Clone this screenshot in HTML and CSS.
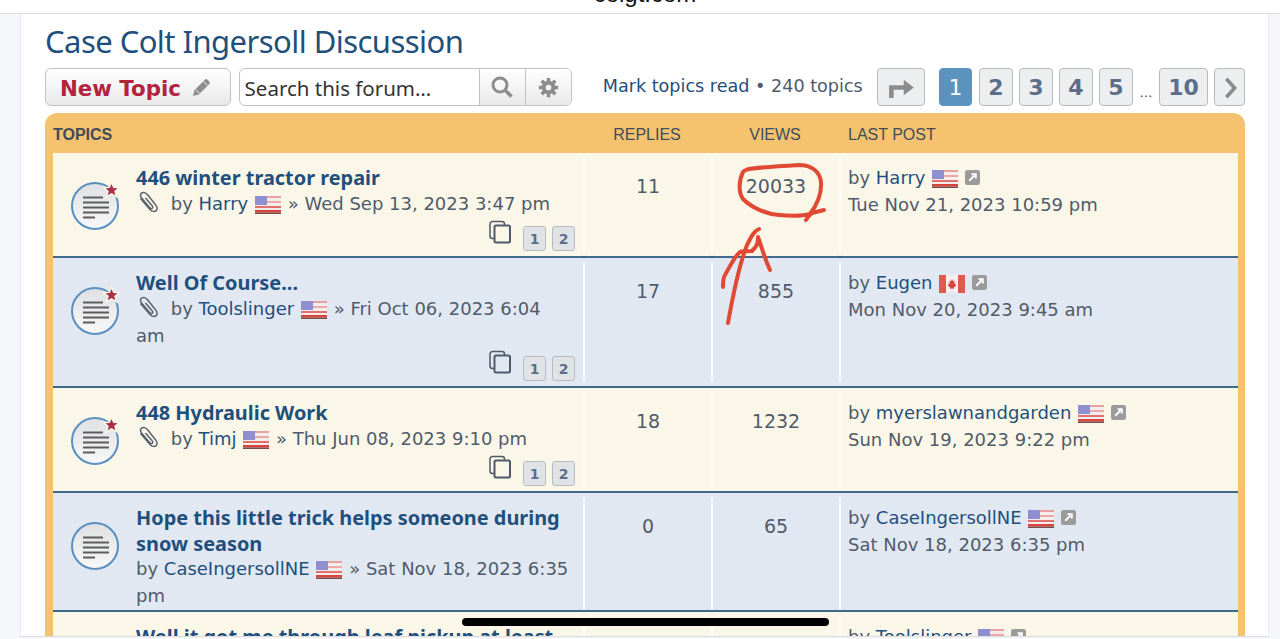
FILE: index.html
```html
<!DOCTYPE html>
<html lang="en">
<head>
<meta charset="utf-8">
<title>Case Colt Ingersoll Discussion</title>
<link rel="stylesheet" href="styles.css">
</head>
<body>
<svg class="defs" width="0" height="0" aria-hidden="true">
  <defs>
    <linearGradient id="bubble" x1="0" y1="0" x2="0" y2="1"><stop offset="0" stop-color="#dfe0e3"/><stop offset="1" stop-color="#f8f8f8"/></linearGradient>
    <symbol id="flag-us" viewBox="0 0 26 18">
      <rect width="26" height="18" fill="#f3eeee"/>
      <rect y="0" width="26" height="2" fill="#e9a0a0"/><rect y="5" width="26" height="2" fill="#eda9a6"/><rect y="10" width="26" height="2" fill="#e5706a"/><rect y="14" width="26" height="2.5" fill="#d8433c"/><rect y="16.500" width="26" height="1.500" fill="#7a4a48"/>
      <rect width="12" height="9" fill="#8f8fd0"/>
    </symbol>
    <symbol id="flag-ca" viewBox="0 0 26 18">
      <rect width="26" height="18" fill="#f6eeee"/><rect width="7" height="18" fill="#df5a50"/><rect x="19" width="7" height="18" fill="#df5a50"/>
      <path d="M13 4l1.200 2.500 1.500-.6-.5 3 1.800-.5-.6 1.600.9.500-2.800 2.200.3 1.200-1.800-.3-1.800.3.300-1.200-2.800-2.200.9-.5-.6-1.600 1.800.5-.5-3 1.500.6z" fill="#d8433c"/>
    </symbol>
    <symbol id="goto" viewBox="0 0 16 16">
      <rect width="16" height="16" rx="2.500" fill="#9b9b9b"/>
      <path d="M4.500 11.500L10 6M7 4.500h4.500V9" stroke="#fff" stroke-width="2" fill="none"/>
    </symbol>
    <symbol id="clip" viewBox="0 0 22 24">
      <path d="M3.500 8.500l9.500 11c2 2.300 5 2.400 6.300.9 1.300-1.500.8-3.700-.8-5.600L10.800 5C8.900 2.700 6.300 1.600 4.500 3.100 2.900 4.500 3.500 6.800 5.200 8.800l7.400 8.700c.9 1 2 1.300 2.700.7.700-.6.500-1.700-.4-2.800L8.500 8" fill="none" stroke="#5a6370" stroke-width="1.500"/>
    </symbol>
    <symbol id="pages" viewBox="0 0 24 24">
      <path d="M6 18.500H4.500A2.500 2.500 0 0 1 2 16V4A2.500 2.500 0 0 1 4.500 1.500H14A2.500 2.500 0 0 1 16.500 4v1" fill="none" stroke="#4f5a68" stroke-width="1.500"/>
      <rect x="6.500" y="5.500" width="15.500" height="17" rx="1.500" fill="none" stroke="#4f5a68" stroke-width="2"/>
    </symbol>
    <symbol id="topic-new" viewBox="0 0 52 52">
      <circle cx="26" cy="28" r="23" fill="url(#bubble)" stroke="#5a8fc0" stroke-width="2"/>
      <path d="M42.500 6l1.700 4 4.300.3-3.300 2.800 1.100 4.200-3.800-2.300-3.800 2.300 1.100-4.200-3.300-2.800 4.300-.3z" fill="#a8304a" stroke="#fbf7e8" stroke-width="3" paint-order="stroke"/>
      <path d="M14 18.500h20v2H14zM14 23.500h26v2H14zM14 28.500h26v2H14zM14 33.500h26v2H14zM14 38.500h12v2H14z" fill="#5c5c5c"/>
    </symbol>
    <symbol id="topic-read" viewBox="0 0 52 52">
      <circle cx="26" cy="28" r="23" fill="url(#bubble)" stroke="#5a8fc0" stroke-width="2"/>
      <path d="M14 18.500h20v2H14zM14 23.500h26v2H14zM14 28.500h26v2H14zM14 33.500h26v2H14zM14 38.500h12v2H14z" fill="#5c5c5c"/>
    </symbol>
  </defs>
</svg>

<header class="topbar"><span class="host">colgt.com</span></header>

<div class="page">
  <main class="content">
    <h2 class="forum-title">Case Colt Ingersoll Discussion</h2>

    <div class="action-bar">
      <a class="new-topic"><span class="new-topic-label">New Topic</span>
        <svg class="pencil" viewBox="0 0 20 20" width="20" height="20"><path d="M1 19l1.400-5.800L13 2.600a1.600 1.600 0 0 1 2.200 0l2.200 2.200a1.600 1.600 0 0 1 0 2.200L6.800 17.600z" fill="#8e8e8e"/><path d="M3.500 12.500l4 4M11.500 4.500l4 4" stroke="#eee" stroke-width="1"/></svg>
      </a>
      <div class="search">
        <span class="search-input">Search this forum…</span>
        <span class="search-btn"><svg viewBox="0 0 24 24" width="24" height="24"><circle cx="10" cy="10" r="7" fill="none" stroke="#8c8c8c" stroke-width="3"/><path d="M15.500 15.500l6 6" stroke="#8c8c8c" stroke-width="3.500"/></svg></span>
        <span class="search-btn"><svg viewBox="0 0 24 24" width="21" height="21"><circle cx="12" cy="12" r="5.500" fill="none" stroke="#8c8c8c" stroke-width="4.500"/><path d="M12 1v5M12 18v5M1 12h5M18 12h5M4.200 4.200l3.500 3.500M16.300 16.300l3.500 3.500M4.200 19.800l3.500-3.500M16.300 7.700l3.500-3.500" stroke="#8c8c8c" stroke-width="4"/></svg></span>
      </div>
      <div class="stats"><a>Mark topics read</a> • 240 topics</div>
      <div class="pager">
        <span class="page-btn jump"><svg viewBox="0 0 32 24" width="30" height="22"><path d="M3 23V9h16V3l11 8.500L19 20v-6H8v9z" fill="#8c8c8c"/></svg></span>
        <span class="page-btn active">1</span>
        <span class="page-btn">2</span>
        <span class="page-btn">3</span>
        <span class="page-btn">4</span>
        <span class="page-btn">5</span>
        <span class="dots">…</span>
        <span class="page-btn wide">10</span>
        <span class="page-btn next"><svg viewBox="0 0 14 24" width="14" height="22"><path d="M3 2l9 10-9 10" fill="none" stroke="#8c8c8c" stroke-width="4"/></svg></span>
      </div>
    </div>

    <section class="forumbg">
      <div class="head-row">
        <div class="h-topics">TOPICS</div>
        <div class="h-num">REPLIES</div>
        <div class="h-num">VIEWS</div>
        <div class="h-last">LAST POST</div>
      </div>

      <article class="row bg1 r1">
        <div class="cell topic">
          <svg class="topic-icon"><use href="#topic-new"/></svg>
          <div class="topic-body">
            <a class="topic-title">446 winter tractor repair</a>
            <div class="meta"><svg class="clip"><use href="#clip"/></svg> by <a>Harry</a> <svg class="flag"><use href="#flag-us"/></svg> » Wed Sep 13, 2023 3:47 pm</div>
            <div class="mini-pages"><svg class="pages-ico"><use href="#pages"/></svg><span class="mini">1</span><span class="mini">2</span></div>
          </div>
        </div>
        <div class="cell num">11</div>
        <div class="cell num">20033</div>
        <div class="cell last"><div>by <a>Harry</a> <svg class="flag"><use href="#flag-us"/></svg> <svg class="goto"><use href="#goto"/></svg></div><div>Tue Nov 21, 2023 10:59 pm</div></div>
      </article>

      <article class="row bg2 r2">
        <div class="cell topic">
          <svg class="topic-icon"><use href="#topic-new"/></svg>
          <div class="topic-body">
            <a class="topic-title">Well Of Course...</a>
            <div class="meta"><svg class="clip"><use href="#clip"/></svg> by <a>Toolslinger</a> <svg class="flag"><use href="#flag-us"/></svg> » Fri Oct 06, 2023 6:04 am</div>
            <div class="mini-pages"><svg class="pages-ico"><use href="#pages"/></svg><span class="mini">1</span><span class="mini">2</span></div>
          </div>
        </div>
        <div class="cell num">17</div>
        <div class="cell num">855</div>
        <div class="cell last"><div>by <a>Eugen</a> <svg class="flag"><use href="#flag-ca"/></svg> <svg class="goto"><use href="#goto"/></svg></div><div>Mon Nov 20, 2023 9:45 am</div></div>
      </article>

      <article class="row bg1 r1">
        <div class="cell topic">
          <svg class="topic-icon"><use href="#topic-new"/></svg>
          <div class="topic-body">
            <a class="topic-title">448 Hydraulic Work</a>
            <div class="meta"><svg class="clip"><use href="#clip"/></svg> by <a>Timj</a> <svg class="flag"><use href="#flag-us"/></svg> » Thu Jun 08, 2023 9:10 pm</div>
            <div class="mini-pages"><svg class="pages-ico"><use href="#pages"/></svg><span class="mini">1</span><span class="mini">2</span></div>
          </div>
        </div>
        <div class="cell num">18</div>
        <div class="cell num">1232</div>
        <div class="cell last"><div>by <a>myerslawnandgarden</a> <svg class="flag"><use href="#flag-us"/></svg> <svg class="goto"><use href="#goto"/></svg></div><div>Sun Nov 19, 2023 9:22 pm</div></div>
      </article>

      <article class="row bg2 r4">
        <div class="cell topic">
          <svg class="topic-icon"><use href="#topic-read"/></svg>
          <div class="topic-body">
            <a class="topic-title">Hope this little trick helps someone during snow season</a>
            <div class="meta">by <a>CaseIngersollNE</a> <svg class="flag"><use href="#flag-us"/></svg> » Sat Nov 18, 2023 6:35 pm</div>
          </div>
        </div>
        <div class="cell num">0</div>
        <div class="cell num">65</div>
        <div class="cell last"><div>by <a>CaseIngersollNE</a> <svg class="flag"><use href="#flag-us"/></svg> <svg class="goto"><use href="#goto"/></svg></div><div>Sat Nov 18, 2023 6:35 pm</div></div>
      </article>

      <article class="row bg1 r1">
        <div class="cell topic">
          <svg class="topic-icon"><use href="#topic-new"/></svg>
          <div class="topic-body">
            <a class="topic-title">Well it got me through leaf pickup at least</a>
          </div>
        </div>
        <div class="cell num">7</div>
        <div class="cell num">240</div>
        <div class="cell last"><div>by <a>Toolslinger</a> <svg class="flag"><use href="#flag-us"/></svg> <svg class="goto"><use href="#goto"/></svg></div></div>
      </article>
    </section>
  </main>
</div>

<svg class="scribble" viewBox="0 0 1280 639" width="1280" height="639" aria-hidden="true">
  <path d="M743 172c-4 8-5 20 0 27 8 8 22 15 36 16 12 1 24 1 31-1 6-8 12-18 11-32-1-10-9-17-22-17-18 1-36 2-50 4-3 1-5 1-6 3zM806 220c2-3 3-5 6-7 4-1 8-2 12-3" fill="none" stroke="#e04a35" stroke-width="4" stroke-linecap="round" stroke-linejoin="round"/>
  <path d="M759 229c-5 2-8 8-12 16-8 20-14 50-19 78M723 287c0-5 0-9 2-12 5-9 10-19 15-23 3-1 8-1 12-1 5-5 6-7 6-14 3 8 6 20 12 33" fill="none" stroke="#e04a35" stroke-width="4" stroke-linecap="round" stroke-linejoin="round"/>
</svg>
<div class="home-bar"></div>
</body>
</html>
```
FILE: styles.css
```css
* { box-sizing: border-box; }
html, body { margin: 0; height: 639px; overflow: hidden; }
body {
  position: relative;
  background: #f5f7fa;
  color: #4f5b6b;
  font-family: "DejaVu Sans", Verdana, sans-serif;
  font-size: 18px;
}
a { color: #1f4f7d; }
.defs { position: absolute; }

.topbar {
  height: 14px;
  background: #fff;
  border-bottom: 1px solid #dcdcdc;
  overflow: hidden;
  text-align: center;
}
.host {
  display: block;
  color: #111;
  font: 24px/24px "Liberation Sans", Arial, sans-serif;
  margin-top: -18px;
  padding-left: 10px;
}

.page {
  margin: 0 11px 0 20px;
  background: #fff;
  border-left: 1px solid #e6e9ee;
  border-right: 1px solid #e6e9ee;
  height: 623px;
  border-bottom: 1px solid #dcdcdc;
  overflow: hidden;
}
.content { padding: 0 23px 0 24px; }

.forum-title {
  margin: 0;
  padding-top: 8px;
  height: 54px;
  color: #1f4f7d;
  font: normal 31px/38px "Noto Sans", "Open Sans", sans-serif;
  letter-spacing: -.55px;
}

.action-bar { display: flex; align-items: flex-start; height: 45px; }
.new-topic {
  display: flex;
  align-items: center;
  width: 186px;
  height: 38px;
  padding: 2px 0 0 14px;
  border: 1px solid #c0c4c8;
  border-radius: 6px;
  background: linear-gradient(#fff, #e9e9e9);
  color: #b3233f;
  font-weight: 700;
  font-size: 21.300px;
}
.pencil { margin-left: 11px; margin-top: -2px; }
.search {
  display: flex;
  width: 334px;
  height: 38px;
  margin-left: 8px;
  border: 1px solid #c0c4c8;
  border-radius: 6px;
  overflow: hidden;
  background: #fff;
}
.search-input {
  flex: 1;
  padding: 1px 0 0 5px;
  line-height: 36px;
  color: #333;
  font-size: 20.500px;
  font-family: "Noto Sans", sans-serif;
}
.search-btn {
  width: 46px;
  display: flex;
  align-items: center;
  justify-content: center;
  border-left: 1px solid #c0c4c8;
  background: linear-gradient(#fff, #e9e9e9);
}
.stats { margin-left: 31px; line-height: 37px; white-space: nowrap; font-size: 17.600px; width: 275px; }
.pager { display: flex; gap: 6px; align-items: flex-start; }
.page-btn {
  width: 34px;
  height: 38px;
  padding-top: 1px;
  display: flex;
  align-items: center;
  justify-content: center;
  border: 1px solid #b8bcc0;
  border-radius: 4px;
  background: #eceef0;
  color: #5b6f8a;
  font-weight: 700;
  font-size: 22px;
}
.page-btn.jump { width: 48px; margin-right: 8px; }
.page-btn.active { width: 33px; margin-right: 1px; background: #5b93bf; border-color: #5b93bf; color: #fff; font-weight: 400; }
.page-btn.wide { width: 49px; }
.page-btn.next { width: 31px; }
.dots { width: 14px; line-height: 50px; font-size: 13px; color: #444; text-align: center; }

.forumbg {
  background: #f5c26f;
  border-radius: 12px 12px 0 0;
  padding: 0 7px 0 8px;
}
.head-row {
  display: grid;
  grid-template-columns: 530px 128px 128px 1fr;
  height: 40px;
  padding-top: 4px;
  align-items: center;
  font: 16px "Liberation Sans", Arial, sans-serif;
  color: #3f4d5a;
}
.h-topics { font-weight: 700; }
.h-num { text-align: center; }
.h-last { padding-left: 9px; }

.row {
  display: grid;
  grid-template-columns: 530px 128px 128px 1fr;
  border-bottom: 2px solid #3f6a8c;
}
.bg1 { background: #fbf7e8; }
.bg2 { background: #e2e8f2; }
.r1 { height: 105px; }
.r2 { height: 130px; }
.r4 { height: 119px; }

.cell { margin: 4px 0; border-left: 2px solid rgba(255,255,255,.75); }
.topic { display: flex; border-left: 0; padding-left: 16px; }
.topic-icon { width: 52px; height: 52px; flex: none; margin-top: 21px; }
.topic-body { padding: 8px 14px 0 15px; min-width: 0; flex: 1; display: flex; flex-direction: column; }
.topic-title {
  display: block;
  font: 700 19.900px/25.500px "Noto Sans", sans-serif;
  color: #1f4f7d;
}
.meta { line-height: 27px; margin-top: -1px; }
.clip { width: 22px; height: 24px; vertical-align: 2px; margin: -6px 6px -6px 1px; }
.flag { width: 26px; height: 18px; vertical-align: -4px; margin: 0 1px; }
.goto { width: 15px; height: 15px; vertical-align: -1px; }
.mini-pages { display: flex; justify-content: flex-end; align-items: flex-start; gap: 6px; margin: auto -12px 0 0; padding: 0 6px 1px 0; }
.pages-ico { width: 24px; height: 24px; margin-right: 5px; margin-top: -6px; }
.mini {
  width: 23px;
  height: 25px;
  border: 1px solid #b8bcc0;
  border-radius: 3px;
  background: #e0e3e6;
  color: #5b6f8a;
  font-weight: 700;
  font-size: 14px;
  line-height: 25px;
  text-align: center;
}
.num { text-align: center; padding-top: 16px; font-size: 19px; line-height: 26px; }
.last { padding: 7px 0 0 7px; line-height: 27px; }

.scribble { position: absolute; left: 0; top: 0; pointer-events: none; }
.home-bar {
  position: absolute;
  left: 462px;
  top: 618px;
  width: 367px;
  height: 8px;
  border-radius: 4px;
  background: #000;
}
```
